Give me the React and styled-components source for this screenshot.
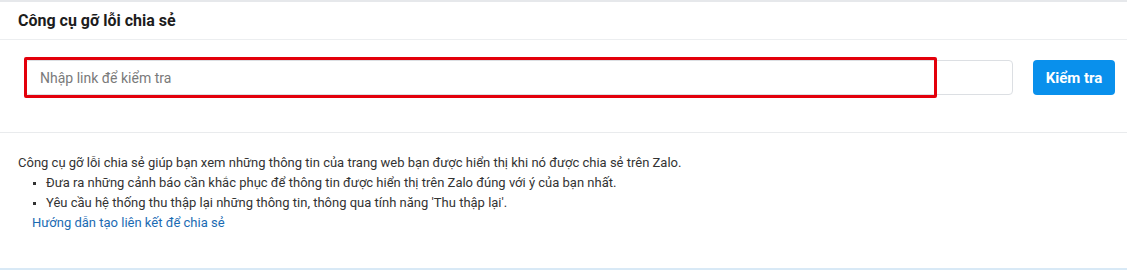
import React from 'react';
import styled, { createGlobalStyle } from 'styled-components';

const GlobalStyle = createGlobalStyle`
  body {
    margin: 0;
    background: #fff;
    font-family: Roboto, "Noto Sans", "Liberation Sans", sans-serif;
    color: #333;
  }
`;

const Page = styled.div`
  border-top: 2px solid #e6e8eb;
  width: 1127px;
  box-sizing: border-box;
`;

const Header = styled.div`
  height: 38px;
  display: flex;
  align-items: center;
  padding: 0 18px;
  border-bottom: 1px solid #eceef0;
  box-sizing: border-box;
`;

const Title = styled.h2`
  margin: 0;
  font-size: 16px;
  font-weight: 700;
  color: #1c1c1c;
`;

const FormRow = styled.div`
  position: relative;
  display: flex;
  align-items: center;
  gap: 20px;
  padding: 20px 12px 37px 25px;
  border-bottom: 1px solid #e9ebed;
`;

const LinkInput = styled.input`
  flex: 1;
  height: 35px;
  box-sizing: border-box;
  border: 1px solid #dcdfe3;
  border-radius: 4px;
  padding: 0 14px;
  font-family: inherit;
  font-size: 14px;
  color: #333;
  outline: none;

  &::placeholder {
    color: #7a7a7a;
  }
`;

const Highlight = styled.div`
  position: absolute;
  left: 24px;
  top: 17px;
  width: 913px;
  height: 41px;
  box-sizing: border-box;
  border: 3px solid #e3000b;
  border-radius: 2px;
  pointer-events: none;
`;

const CheckButton = styled.button`
  width: 82px;
  height: 35px;
  border: none;
  border-radius: 4px;
  background: #0990ec;
  color: #fff;
  font-family: inherit;
  font-size: 15px;
  font-weight: 700;
  cursor: pointer;
`;

const Info = styled.div`
  padding: 20px 18px 0;
  height: 137px;
  box-sizing: border-box;
  border-bottom: 2px solid #d8e9f6;
  font-size: 13px;
  line-height: 20px;
  color: #333;
`;

const Intro = styled.p`
  margin: 0;
`;

const List = styled.ul`
  margin: 0;
  padding-left: 28px;
  list-style: square;

  li::marker {
    font-size: 10px;
  }
`;

const GuideLink = styled.a`
  display: inline-block;
  margin-left: 14px;
  color: #1b6bb3;
  text-decoration: none;
`;

export default function App() {
  return (
    <>
      <GlobalStyle />
      <Page>
        <Header>
          <Title>Công cụ gỡ lỗi chia sẻ</Title>
        </Header>
        <FormRow>
          <LinkInput placeholder="Nhập link để kiểm tra" />
          <CheckButton>Kiểm tra</CheckButton>
          <Highlight />
        </FormRow>
        <Info>
          <Intro>Công cụ gỡ lỗi chia sẻ giúp bạn xem những thông tin của trang web bạn được hiển thị khi nó được chia sẻ trên Zalo.</Intro>
          <List>
            <li>Đưa ra những cảnh báo cần khắc phục để thông tin được hiển thị trên Zalo đúng với ý của bạn nhất.</li>
            <li>Yêu cầu hệ thống thu thập lại những thông tin, thông qua tính năng 'Thu thập lại'.</li>
          </List>
          <GuideLink href="#">Hướng dẫn tạo liên kết để chia sẻ</GuideLink>
        </Info>
      </Page>
    </>
  );
}
